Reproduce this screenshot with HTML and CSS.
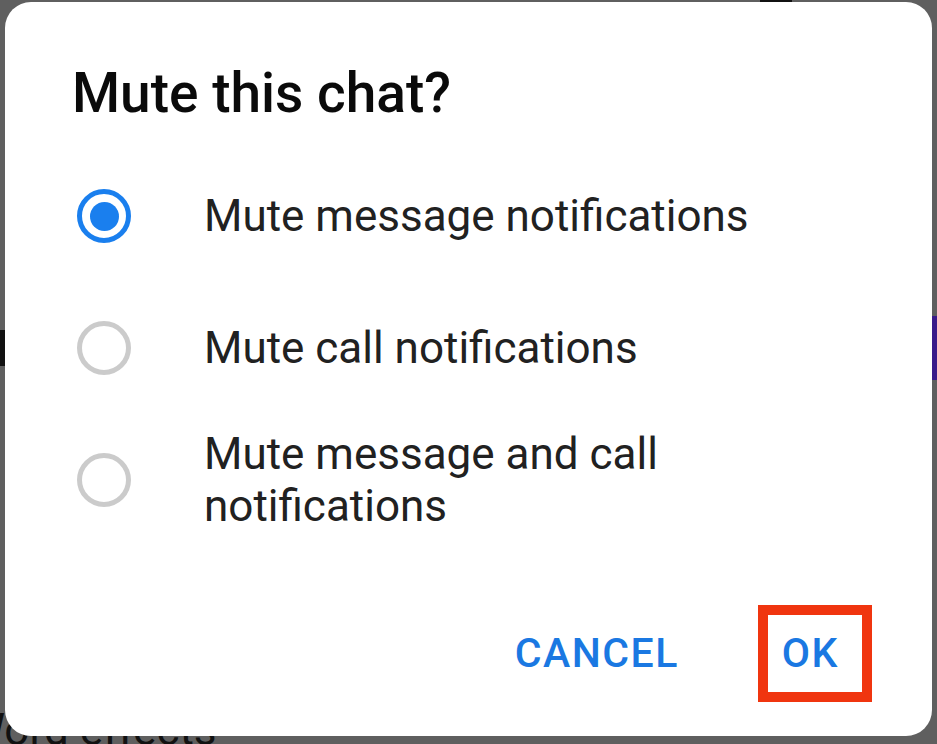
FILE: index.html
```html
<!DOCTYPE html>
<html lang="en">
<head>
<meta charset="utf-8">
<title>Mute this chat?</title>
<link rel="stylesheet" href="styles.css">
</head>
<body>
<div class="backdrop" aria-hidden="true">
  <div class="bg-text">Word effects</div>
  <div class="bg-bar-left"></div>
  <div class="bg-bar-right"></div>
  <div class="bg-top"></div>
</div>
<div class="dialog" role="dialog">
  <h1 class="title">Mute this chat?</h1>
  <div class="options">
    <label class="option">
      <span class="radio radio-on"><span class="dot"></span></span>
      <span class="label">Mute message notifications</span>
    </label>
    <label class="option">
      <span class="radio"></span>
      <span class="label">Mute call notifications</span>
    </label>
    <label class="option">
      <span class="radio"></span>
      <span class="label">Mute message and call<br>notifications</span>
    </label>
  </div>
  <div class="actions">
    <button class="btn">CANCEL</button>
    <button class="btn btn-ok">OK<span class="highlight"></span></button>
  </div>
</div>
</body>
</html>
```
FILE: styles.css
```css
* { box-sizing: border-box; }
html, body { margin: 0; padding: 0; }
body {
  width: 937px;
  height: 744px;
  overflow: hidden;
  background: #5f5f5f;
  font-family: Roboto, "Noto Sans", sans-serif;
  position: relative;
}
.backdrop { position: absolute; inset: 0; z-index: 0; }
.bg-text {
  position: absolute;
  left: -34px;
  top: 704px;
  font-size: 44px;
  line-height: 52px;
  color: #111;
  white-space: nowrap;
}
.bg-bar-left {
  position: absolute; left: 0; top: 330px; width: 5px; height: 36px; background: #111;
}
.bg-bar-right {
  position: absolute; right: 0; top: 316px; width: 5px; height: 64px; background: #3a1a8a;
}
.bg-top {
  position: absolute; left: 760px; top: 0; width: 32px; height: 3px; background: #111;
}
.dialog {
  position: relative;
  z-index: 1;
  margin: 2px 0 0 5px;
  width: 927px;
  height: 734px;
  background: #fff;
  border-radius: 26px;
  display: flex;
  flex-direction: column;
  padding: 58px 0 0 0;
}
.title {
  margin: 0 0 24px 67px;
  font-size: 55px;
  line-height: 66px;
  font-weight: 500;
  color: #0a0a0a;
}
.options { display: flex; flex-direction: column; }
.option {
  display: flex;
  align-items: center;
  min-height: 132px;
  padding-left: 72px;
}
.radio {
  flex: none;
  width: 54px;
  height: 54px;
  border-radius: 50%;
  border: 5px solid #cbcbcb;
  display: flex;
  align-items: center;
  justify-content: center;
  margin-right: 73px;
}
.radio-on { border-color: #1a7fee; }
.dot { width: 29px; height: 29px; border-radius: 50%; background: #1a7fee; }
.label {
  font-size: 44px;
  line-height: 52px;
  color: #212121;
}
.actions {
  margin-top: auto;
  padding: 0 69px 59px 0;
  display: flex;
  justify-content: flex-end;
  gap: 55px;
}
.btn {
  position: relative;
  border: none;
  background: none;
  padding: 0 24px;
  font-family: Roboto, "Noto Sans", sans-serif;
  font-size: 41px;
  line-height: 48px;
  letter-spacing: 1.5px;
  font-weight: 500;
  color: #1a78e2;
}
.highlight {
  position: absolute;
  left: 0;
  top: -24px;
  width: 114px;
  height: 97px;
  border: 10px solid #f0350f;
}
```
